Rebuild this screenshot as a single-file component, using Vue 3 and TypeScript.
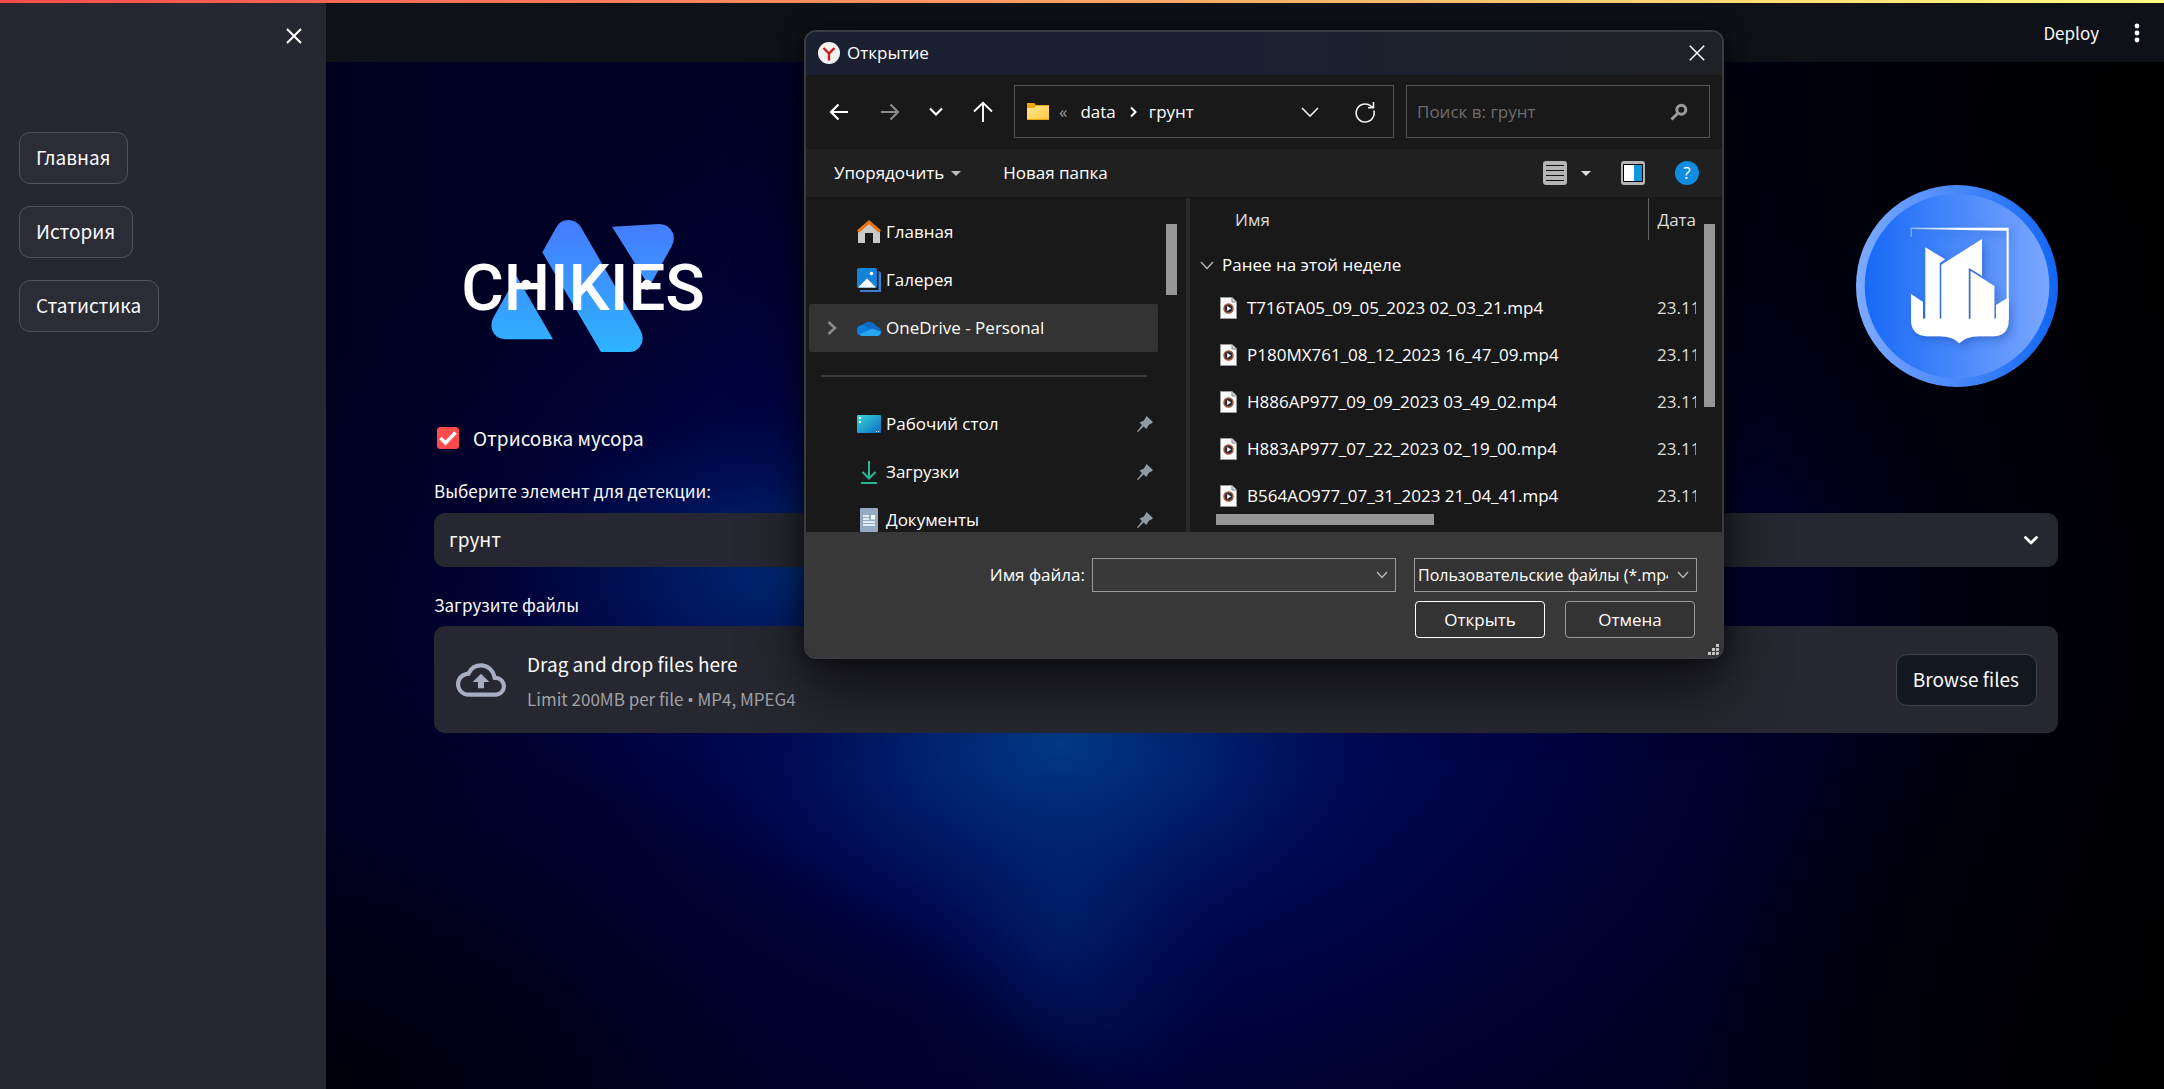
<script setup lang="ts">
import { ref } from 'vue'

interface FileRow {
  name: string
  date: string
}

interface Place {
  id: string
  label: string
  icon: 'home' | 'gallery' | 'cloud' | 'desktop' | 'download' | 'document'
  pinned?: boolean
  active?: boolean
}

const pages: string[] = ['Главная', 'История', 'Статистика']

const topPlaces: Place[] = [
  { id: 'home', label: 'Главная', icon: 'home' },
  { id: 'gallery', label: 'Галерея', icon: 'gallery' },
  { id: 'onedrive', label: 'OneDrive - Personal', icon: 'cloud', active: true },
]

const pinnedPlaces: Place[] = [
  { id: 'desktop', label: 'Рабочий стол', icon: 'desktop', pinned: true },
  { id: 'downloads', label: 'Загрузки', icon: 'download', pinned: true },
  { id: 'documents', label: 'Документы', icon: 'document', pinned: true },
]

const placeGroups: Place[][] = [topPlaces, pinnedPlaces]

const files: FileRow[] = [
  { name: 'T716TA05_09_05_2023 02_03_21.mp4', date: '23.11' },
  { name: 'P180MX761_08_12_2023 16_47_09.mp4', date: '23.11' },
  { name: 'H886AP977_09_09_2023 03_49_02.mp4', date: '23.11' },
  { name: 'H883AP977_07_22_2023 02_19_00.mp4', date: '23.11' },
  { name: 'B564AO977_07_31_2023 21_04_41.mp4', date: '23.11' },
]

const drawTrash = ref(true)
const element = ref('грунт')
const fileName = ref('')
const search = ref('')
</script>

<template>
  <div class="app">
    <div class="rainbow"></div>

    <aside class="sidebar">
      <div class="sidebar-top">
        <button class="icon-btn" type="button" aria-label="Закрыть меню">
          <svg width="16" height="16" viewBox="0 0 16 16"><path d="M1 1L15 15M15 1L1 15" stroke="#fff" stroke-width="2" fill="none" /></svg>
        </button>
      </div>
      <nav class="pages">
        <button v-for="page in pages" :key="page" class="st-btn" type="button">{{ page }}</button>
      </nav>
    </aside>

    <main class="main">
      <svg class="backdrop" viewBox="0 0 1838 1027" preserveAspectRatio="none" aria-hidden="true">
        <defs>
          <linearGradient id="base" x1="0" x2="1" y1="0" y2="0">
            <stop offset="0" stop-color="#00001e" />
            <stop offset=".3" stop-color="#000028" />
            <stop offset=".75" stop-color="#000020" />
            <stop offset="1" stop-color="#000003" />
          </linearGradient>
          <radialGradient id="wide">
            <stop offset="0" stop-color="#00106e" />
            <stop offset=".5" stop-color="#000650" stop-opacity=".8" />
            <stop offset="1" stop-color="#000030" stop-opacity="0" />
          </radialGradient>
          <radialGradient id="glow">
            <stop offset="0" stop-color="#003f8c" />
            <stop offset=".4" stop-color="#002b76" stop-opacity=".75" />
            <stop offset="1" stop-color="#00105a" stop-opacity="0" />
          </radialGradient>
          <radialGradient id="dark">
            <stop offset="0" stop-color="#000" stop-opacity=".9" />
            <stop offset="1" stop-color="#000" stop-opacity="0" />
          </radialGradient>
          <filter id="soft" x="-20%" y="-20%" width="140%" height="140%"><feGaussianBlur stdDeviation="24" /></filter>
        </defs>
        <rect width="1838" height="1027" fill="url(#base)" />
        <ellipse cx="760" cy="600" rx="860" ry="640" fill="url(#wide)" />
        <ellipse cx="480" cy="510" rx="330" ry="170" fill="url(#glow)" opacity=".65" />
        <ellipse cx="735" cy="680" rx="340" ry="230" fill="url(#glow)" />
        <ellipse cx="740" cy="860" rx="170" ry="240" fill="url(#glow)" opacity=".35" />
        <ellipse cx="1838" cy="60" rx="760" ry="460" fill="url(#dark)" />
        <ellipse cx="1838" cy="1027" rx="520" ry="420" fill="url(#dark)" />
        <path d="M-60 620L180 670L430 790L660 920L860 1110H-60Z" fill="#000020" opacity=".45" filter="url(#soft)" />
        <ellipse cx="0" cy="1027" rx="460" ry="280" fill="url(#dark)" opacity=".7" />
      </svg>

      <header class="header">
        <a class="deploy" href="#">Deploy</a>
        <button class="icon-btn" type="button" aria-label="Меню">
          <svg width="6" height="20" viewBox="0 0 6 20" fill="#fff"><circle cx="3" cy="3" r="2.4" /><circle cx="3" cy="10" r="2.4" /><circle cx="3" cy="17" r="2.4" /></svg>
        </button>
      </header>

      <div class="content">
        <div class="logos">
          <svg class="brand" width="234" height="132" viewBox="138 93 702 396" role="img" aria-label="CHIKIES">
            <defs>
              <linearGradient id="brandFill" gradientUnits="userSpaceOnUse" x1="0" y1="93" x2="0" y2="489">
                <stop offset="0" stop-color="#467bff" />
                <stop offset="1" stop-color="#2db4ff" />
              </linearGradient>
            </defs>
            <g fill="url(#brandFill)">
              <path d="M367 190L409 115Q421 93 445 93Q469 93 483 115L660 421Q677 452 659 474Q648 489 628 489H543Z" />
              <path d="M290 262L399 451H256Q226 449 216 422Q211 402 221 384Z" />
              <path d="M576 113L718 105Q748 106 759 133Q765 150 756 170L693 284Q688 290 683 284Z" />
            </g>
            <text class="brand-text" x="489" y="362" text-anchor="middle">CHIKIES</text>
            <g fill="#fff"><circle cx="318" cy="287" r="15" /><circle cx="681" cy="287" r="15" /></g>
          </svg>

          <svg class="badge" width="202" height="202" viewBox="112 75 606 606" aria-hidden="true">
            <defs>
              <linearGradient id="ring"><stop offset="0" stop-color="#7eaaff" /><stop offset="1" stop-color="#1266f4" /></linearGradient>
              <linearGradient id="disc"><stop offset="0" stop-color="#1769f6" /><stop offset="1" stop-color="#7ba7ff" /></linearGradient>
              <linearGradient id="frame"><stop offset="0" stop-color="#fff" stop-opacity=".5" /><stop offset=".5" stop-color="#fff" /></linearGradient>
              <filter id="drop"><feDropShadow dx="10" dy="12" stdDeviation="12" flood-color="#1c4fb0" flood-opacity=".5" /></filter>
            </defs>
            <circle cx="415" cy="378" r="303" fill="url(#ring)" />
            <circle cx="415" cy="378" r="277" fill="url(#disc)" />
            <g fill="#fff" filter="url(#drop)">
              <path d="M276 230V203H570V480H564V212L279 207V230Z" fill="url(#frame)" />
              <path d="M277 402L313 426V476H320V262L379 298L363 310V476H368V314L490 237V347L450 323V476H456V333L527 378V476H532V435L570 412V480Q570 529 522 529H480Q442 529 422 550Q402 529 364 529H325Q277 526 277 480Z" />
            </g>
          </svg>
        </div>

        <label class="check">
          <input v-model="drawTrash" type="checkbox" />
          <span>Отрисовка мусора</span>
        </label>

        <label class="field-label" for="element">Выберите элемент для детекции:</label>
        <div class="select-box">
          <select id="element" v-model="element">
            <option>грунт</option>
          </select>
          <svg class="select-arrow" width="14" height="9" viewBox="0 0 14 9"><path d="M1.500 1.500L7 7L12.500 1.500" fill="none" stroke="#fff" stroke-width="2.800" stroke-linejoin="round" stroke-linecap="round" /></svg>
        </div>

        <p class="field-label upload-label">Загрузите файлы</p>
        <section class="uploader">
          <svg class="cloud" width="50" height="34" viewBox="0 4 24 16">
            <path fill="#a9adc1" d="M19.35 10.04A7.49 7.49 0 0 0 12 4 7.5 7.5 0 0 0 5.35 8.04 5.994 5.994 0 0 0 0 14c0 3.31 2.69 6 6 6h13c2.76 0 5-2.24 5-5 0-2.64-2.05-4.78-4.65-4.96zM19 18H6c-2.21 0-4-1.79-4-4 0-2.05 1.53-3.76 3.56-3.97l1.07-.11.5-.95A5.469 5.469 0 0 1 12 6c2.62 0 4.88 1.86 5.39 4.43l.3 1.5 1.53.11A2.98 2.98 0 0 1 22 15c0 1.65-1.35 3-3 3zM8 13h2.55v3h2.9v-3H16l-4-4z" />
          </svg>
          <div class="upload-text">
            <span class="upload-title">Drag and drop files here</span>
            <small>Limit 200MB per file <span class="bullet">•</span> MP4, MPEG4</small>
          </div>
          <button class="st-btn browse" type="button">Browse files</button>
        </section>
      </div>
    </main>

    <div class="dialog" role="dialog" aria-label="Открытие">
      <div class="titlebar">
        <svg width="22" height="22" viewBox="0 0 22 22"><circle cx="11" cy="11" r="11" fill="#f2f2f2" /><path d="M5.500 6L11 11.500V18.500M16.500 6L11 11.500" stroke="#d3141b" stroke-width="2.400" fill="none" /></svg>
        <span class="title">Открытие</span>
        <button class="icon-btn" type="button" aria-label="Закрыть">
          <svg width="16" height="16" viewBox="0 0 16 16"><path d="M.8.8L15.200 15.200M15.200.8L.8 15.200" stroke="#fff" stroke-width="1.500" fill="none" /></svg>
        </button>
      </div>

      <div class="navbar">
        <div class="nav-buttons">
          <button class="icon-btn" type="button" aria-label="Назад">
            <svg width="20" height="18" viewBox="0 0 20 18"><path d="M9.500 1.500L2 9L9.500 16.500M2 9H19" fill="none" stroke="#fff" stroke-width="2.200" /></svg>
          </button>
          <button class="icon-btn" type="button" aria-label="Вперёд">
            <svg width="20" height="18" viewBox="0 0 20 18"><path d="M11.500 1.500L19 9L11.500 16.500M19 9H2" fill="none" stroke="#8c8c8c" stroke-width="2.200" /></svg>
          </button>
          <button class="icon-btn" type="button" aria-label="Последние расположения">
            <svg width="14" height="10" viewBox="0 0 14 10"><path d="M1 1.500L7 7.500L13 1.500" fill="none" stroke="#fff" stroke-width="2.200" /></svg>
          </button>
          <button class="icon-btn" type="button" aria-label="Вверх">
            <svg width="20" height="22" viewBox="0 0 20 22"><path d="M1 10.500L10 1.800L19 10.500M10 2V21" fill="none" stroke="#fff" stroke-width="1.900" /></svg>
          </button>
        </div>
        <div class="address">
          <svg width="22" height="18" viewBox="0 0 22 18">
            <defs><linearGradient id="folder" x2="1" y2="1"><stop offset="0" stop-color="#ffe596" /><stop offset="1" stop-color="#ffca3e" /></linearGradient></defs>
            <path d="M0 0H7L9 2H22V17H0Z" fill="#f0a70a" /><path d="M0 5H7L9 3H22V16H0Z" fill="url(#folder)" />
          </svg>
          <span class="crumb-more">«</span>
          <button class="crumb" type="button">data</button>
          <svg width="7" height="12" viewBox="0 0 7 12"><path d="M1 1.500L5.500 6L1 10.500" fill="none" stroke="#fff" stroke-width="2" /></svg>
          <button class="crumb" type="button">грунт</button>
          <button class="icon-btn address-drop" type="button" aria-label="Показать пути">
            <svg width="18" height="12" viewBox="0 0 18 12"><path d="M1 2L9 10L17 2" fill="none" stroke="#eee" stroke-width="1.600" /></svg>
          </button>
          <button class="icon-btn" type="button" aria-label="Обновить">
            <svg width="20" height="22" viewBox="0 0 20 22"><path d="M18.800 9.500A9 9 0 1 1 16 5.200L18.500 6.500M18.500 1V6.800H13" fill="none" stroke="#eee" stroke-width="1.600" /></svg>
          </button>
        </div>
        <div class="search">
          <input v-model="search" type="text" placeholder="Поиск в: грунт" aria-label="Поиск" />
          <svg width="18" height="18" viewBox="0 0 18 18"><circle cx="11.300" cy="6.700" r="4.500" fill="none" stroke="#9a9a9a" stroke-width="3" /><path d="M8 10L1.500 16.500" stroke="#9a9a9a" stroke-width="3" /></svg>
        </div>
      </div>

      <div class="toolbar">
        <button class="tool" type="button">
          Упорядочить
          <svg width="10" height="5" viewBox="0 0 10 5"><path d="M0 0H10L5 5Z" fill="#bbb" /></svg>
        </button>
        <button class="tool" type="button">Новая папка</button>
        <div class="tool-icons">
          <button class="icon-btn view" type="button" aria-label="Вид">
            <svg width="24" height="24" viewBox="0 0 24 24"><rect width="24" height="24" rx="3" fill="#b5b5b5" /><path d="M3 4.500H21M3 9.500H21M3 14.500H21M3 19.500H21" stroke="#111" stroke-width="1.200" /></svg>
            <svg width="10" height="5" viewBox="0 0 10 5"><path d="M0 0H10L5 5Z" fill="#ddd" /></svg>
          </button>
          <button class="icon-btn" type="button" aria-label="Область просмотра">
            <svg width="24" height="24" viewBox="0 0 24 24"><rect width="24" height="24" rx="3" fill="#b5b5b5" /><rect x="2" y="3" width="20" height="18" fill="#000" rx="1" /><rect x="3" y="4" width="10" height="16" fill="#fff" /><rect x="13" y="4" width="8" height="16" fill="#1496dc" /></svg>
          </button>
          <button class="help" type="button" aria-label="Справка">?</button>
        </div>
      </div>

      <div class="panes">
        <nav class="places">
          <div class="places-list">
            <template v-for="(group, index) in placeGroups" :key="index">
              <div v-if="index > 0" class="separator"></div>
              <a v-for="place in group" :key="place.id" href="#" class="place" :class="{ active: place.active }">
                <span class="expander">
                  <svg v-if="place.active" width="10" height="14" viewBox="0 0 10 14"><path d="M1.500 1L8 7L1.500 13" fill="none" stroke="#8a8a8a" stroke-width="2.600" /></svg>
                </span>
                <svg v-if="place.icon === 'home'" width="24" height="24" viewBox="0 0 24 24">
                  <path d="M1 11L12 2L23 11V23H16V13H8V23H1Z" fill="#c9c9c9" /><path d="M1 11.500L12 2L23 11.500" fill="none" stroke="#ee7410" stroke-width="3" />
                </svg>
                <svg v-else-if="place.icon === 'gallery'" width="24" height="24" viewBox="0 0 24 24">
                  <path d="M21.500 3Q24 3 24 6V24H3V22H21.500Z" fill="#3b80cf" /><rect width="20" height="20" rx="2" fill="#1483d8" /><path d="M1 19.500L10 10.500L19 19.500Z" fill="#fff" /><circle cx="14.500" cy="5.500" r="1.800" fill="#fff" />
                </svg>
                <svg v-else-if="place.icon === 'cloud'" width="24" height="24" viewBox="0 0 24 24">
                  <path d="M5.500 9A8 8 0 0 1 19 10Q24 11 24 15.500Q24 20 19 20H6Q0 20 0 14.500Q0 10 5.500 9Z" fill="#0f6cc4" /><path d="M0 14.500Q0 9 6 9L15 14L4 19.500Q0 18.500 0 14.500Z" fill="#0b7ddb" /><path d="M2.500 18.500L15 12.500L24 15.500Q24 20 19 20H6Q4 20 2.500 18.500Z" fill="#2aa6ee" />
                </svg>
                <svg v-else-if="place.icon === 'desktop'" width="24" height="24" viewBox="0 0 24 24">
                  <defs><linearGradient id="desk" x2="1" y2="1"><stop offset="0" stop-color="#36d6d8" /><stop offset="1" stop-color="#0d6cc4" /></linearGradient></defs>
                  <rect y="3" width="24" height="18" rx="1" fill="url(#desk)" /><path d="M2 5h2v2h-2zM2 9h2v2h-2zM19 19h1v1h-1zM21 19h1v1h-1z" fill="#fff" />
                </svg>
                <svg v-else-if="place.icon === 'download'" width="24" height="24" viewBox="0 0 24 24">
                  <path d="M12 1V18M5.500 12L12 18.500L18.500 12M4 23H20" fill="none" stroke="#24b892" stroke-width="2" />
                </svg>
                <svg v-else width="24" height="24" viewBox="0 0 24 24">
                  <rect x="3" width="18" height="24" rx="1" fill="#93a9c4" /><path d="M6 8H12M6 11H12M6 14H18M6 17H18" stroke="#fff" stroke-width="1.400" /><rect x="14" y="7" width="4" height="4.500" fill="#fff" />
                </svg>
                <span class="place-label">{{ place.label }}</span>
                <svg v-if="place.pinned" class="pin" width="16" height="16" viewBox="0 0 16 16"><path d="M9.500 0L16 6L14.500 7.500L12 8.500L9.500 13L6.500 10.500L1 16L0 15.500L5 9L2.500 6.500L7 4.500Z" fill="#8f9aa2" /></svg>
              </a>
            </template>
          </div>
          <span class="thumb places-thumb"></span>
        </nav>

        <section class="files">
          <div class="files-row">
            <div class="files-clip">
              <table>
                <colgroup><col class="col-name" /><col /></colgroup>
                <thead>
                  <tr><th scope="col" class="th-name">Имя</th><th scope="col" class="th-date">Дата</th></tr>
                </thead>
                <tbody>
                  <tr class="group">
                    <th colspan="2" scope="rowgroup">
                      <div class="cell">
                        <svg width="14" height="9" viewBox="0 0 14 9"><path d="M1 1L7 7.500L13 1" fill="none" stroke="#bbb" stroke-width="1.300" /></svg>
                        Ранее на этой неделе
                      </div>
                    </th>
                  </tr>
                  <tr v-for="file in files" :key="file.name" class="file">
                    <td>
                      <div class="cell file-cell">
                        <svg width="17" height="22" viewBox="0 0 17 22">
                          <path d="M.5.5H12L16.500 5V21.500H.5Z" fill="#fafafa" stroke="#999" /><path d="M12 .5V5H16.500" fill="#ddd" stroke="#888" /><circle cx="8.500" cy="11.500" r="4.500" fill="#2c2c38" stroke="#a0573f" stroke-width="1.500" /><path d="M7.200 9L11 11.500L7.200 14Z" fill="#fff" />
                        </svg>
                        {{ file.name }}
                      </div>
                    </td>
                    <td class="date">{{ file.date }}</td>
                  </tr>
                </tbody>
              </table>
            </div>
            <span class="thumb files-thumb"></span>
          </div>
          <div class="hscroll"><span class="thumb"></span></div>
        </section>
      </div>

      <form class="footer" @submit.prevent>
        <div class="footer-row">
          <label for="filename">Имя файла:</label>
          <div class="combo name-combo">
            <input id="filename" v-model="fileName" type="text" />
            <svg width="12" height="8" viewBox="0 0 12 8"><path d="M1 1L6 6.500L11 1" fill="none" stroke="#bbb" stroke-width="1.300" /></svg>
          </div>
          <div class="combo type-combo">
            <select aria-label="Тип файлов">
              <option>Пользовательские файлы (*.mp4)</option>
            </select>
            <svg width="12" height="8" viewBox="0 0 12 8"><path d="M1 1L6 6.500L11 1" fill="none" stroke="#bbb" stroke-width="1.300" /></svg>
          </div>
        </div>
        <div class="footer-actions">
          <button class="win-btn primary" type="submit">Открыть</button>
          <button class="win-btn" type="button">Отмена</button>
        </div>
        <svg class="grip" width="11" height="11" viewBox="0 0 11 11" fill="#c4c4c4"><path d="M8 0h3v3h-3zM8 4h3v3h-3zM8 8h3v3h-3zM4 4h3v3h-3zM4 8h3v3h-3zM0 8h3v3h-3z" /></svg>
      </form>
    </div>
  </div>
</template>

<style>
body {
  margin: 0;
  background: #0e1117;
}
</style>

<style scoped>
.app,
.app * {
  box-sizing: border-box;
}

.app {
  position: relative;
  display: flex;
  min-height: 100vh;
  overflow: hidden;
  color: #fafafa;
  font-family: "Noto Sans CJK SC", "Noto Sans", sans-serif;
  font-size: 19px;
  line-height: 28px;
}

button,
input,
select {
  margin: 0;
  padding: 0;
  color: inherit;
  font: inherit;
}

a {
  color: inherit;
  text-decoration: none;
}

svg {
  display: block;
  flex: none;
}

.icon-btn {
  display: flex;
  align-items: center;
  border: 0;
  background: none;
}

.rainbow {
  position: absolute;
  z-index: 3;
  top: 0;
  left: 0;
  right: 0;
  height: 3px;
  background: linear-gradient(90deg, #ff4b4b, #fffd80);
}

/* Sidebar */
.sidebar {
  flex: 0 0 326px;
  background: #262730;
}

.sidebar-top {
  display: flex;
  justify-content: flex-end;
  height: 132px;
  padding: 28px 24px 0 0;
}

.sidebar-top .icon-btn {
  height: 16px;
}

.pages {
  display: flex;
  flex-direction: column;
  align-items: flex-start;
  gap: 22px;
  padding-left: 19px;
}

.st-btn {
  height: 52px;
  padding: 0 17px 2px 16px;
  border: 1px solid #51525c;
  border-radius: 11px;
  background: #2b2c36;
  white-space: nowrap;
}

/* Main column */
.main {
  position: relative;
  flex: 1;
  min-width: 0;
}

.backdrop {
  position: absolute;
  top: 62px;
  left: 0;
  width: 100%;
  height: calc(100% - 62px);
}

.header {
  position: relative;
  display: flex;
  align-items: center;
  justify-content: flex-end;
  gap: 35px;
  height: 62px;
  padding: 3px 24px 0 0;
  background: #0e1117;
  font-size: 17px;
}

.content {
  position: relative;
  padding: 123px 106px 0 108px;
}

.logos {
  display: flex;
  align-items: center;
  justify-content: space-between;
  height: 202px;
  padding-left: 32px;
  margin-bottom: 37px;
}

.brand {
  overflow: visible;
}

.brand-text {
  fill: #fff;
  font-family: Roboto, sans-serif;
  font-size: 196px;
  font-weight: 500;
}

.check {
  display: flex;
  align-items: center;
  gap: 14px;
  width: max-content;
  padding-left: 3px;
}

.check input {
  appearance: none;
  width: 22px;
  height: 22px;
  border: 1px solid #777;
  border-radius: 3px;
}

.check input:checked {
  border-color: #ff4b4b;
  background: #ff4b4b url("data:image/svg+xml,%3Csvg xmlns='http://www.w3.org/2000/svg' viewBox='0 0 20 20'%3E%3Cpath d='M2.500 10L7.500 15L17.500 4.500' fill='none' stroke='white' stroke-width='3.400'/%3E%3C/svg%3E") center / 20px no-repeat;
}

.field-label {
  display: block;
  margin: 25px 0 8px;
  font-size: 17px;
  line-height: 28px;
}

.upload-label {
  margin: 24px 0 7px;
}

.select-box {
  position: relative;
}

.select-box select {
  display: block;
  width: 100%;
  height: 54px;
  padding: 0 15px 2px;
  border: 0;
  border-radius: 11px;
  background: #262730;
  appearance: none;
}

.select-arrow {
  position: absolute;
  top: 23px;
  right: 20px;
}

.uploader {
  display: flex;
  align-items: center;
  height: 107px;
  padding: 0 21px 0 22px;
  border-radius: 11px;
  background: #262730;
}

.upload-text {
  display: flex;
  flex: 1;
  flex-direction: column;
  gap: 7px;
  margin-left: 21px;
  padding-top: 4px;
}

.upload-text small {
  color: #a0a1a6;
  font-size: 17px;
}

.bullet {
  font-family: "Noto Sans", sans-serif;
}

.browse {
  border-color: #41444c;
  background: #131720;
}

/* File dialog */
.dialog {
  position: absolute;
  z-index: 5;
  top: 30px;
  left: 804px;
  width: 920px;
  overflow: hidden;
  border: 2px solid #3a3b40;
  border-radius: 12px;
  background: #191919;
  box-shadow: 0 30px 60px rgba(0, 0, 0, 0.6), 0 0 20px rgba(0, 0, 0, 0.5);
  color: #fff;
  font-family: "Open Sans", "Noto Sans", sans-serif;
  font-size: 17px;
  line-height: 24px;
}

.titlebar {
  display: flex;
  align-items: center;
  height: 43px;
  padding: 0 17px 2px 12px;
  background: linear-gradient(90deg, #1b2031 45%, #1f2125);
}

.title {
  flex: 1;
  margin-left: 7px;
}

.navbar {
  display: flex;
  align-items: center;
  height: 74px;
  padding: 0 12px 2px 23px;
}

.nav-buttons {
  display: flex;
  align-items: center;
  gap: 30px;
  width: 185px;
  padding-top: 2px;
}

.address {
  display: flex;
  align-items: center;
  width: 380px;
  height: 53px;
  padding: 2px 18px 0 12px;
  border: 1px solid #535353;
}

.crumb-more {
  margin: 0 13px 0 10px;
  color: #999;
}

.crumb {
  border: 0;
  background: none;
}

.crumb + svg {
  margin: 0 12px 0 14px;
}

.address-drop {
  margin: 0 36px 0 auto;
}

.search {
  display: flex;
  flex: 1;
  align-items: center;
  height: 53px;
  margin-left: 12px;
  padding: 2px 21px 0 10px;
  border: 1px solid #535353;
}

.search input {
  flex: 1;
  min-width: 0;
  border: 0;
  outline: 0;
  background: none;
}

.search input::placeholder {
  color: #6e6e6e;
  opacity: 1;
}

.toolbar {
  display: flex;
  align-items: center;
  gap: 42px;
  height: 48px;
  padding: 0 23px 0 28px;
  background: #202020;
}

.tool {
  display: flex;
  align-items: center;
  gap: 7px;
  border: 0;
  background: none;
}

.tool-icons {
  display: flex;
  align-items: center;
  gap: 30px;
  margin-left: auto;
}

.view {
  gap: 14px;
}

.help {
  width: 24px;
  height: 24px;
  border: 0;
  border-radius: 50%;
  background: #0f8be0;
  line-height: 24px;
}

.panes {
  display: flex;
  height: 335px;
  border-top: 1px solid #161616;
}

.places {
  display: flex;
  flex: 0 0 384px;
  overflow: hidden;
  padding: 10px 8px 0 3px;
  border-right: 4px solid #2a2a2a;
}

.places-list {
  flex: 0 0 349px;
}

.place {
  display: flex;
  align-items: center;
  height: 48px;
  padding-right: 5px;
}

.place.active {
  border-radius: 2px;
  background: #333;
}

.expander {
  width: 48px;
  padding-left: 18px;
}

.place-label {
  flex: 1;
  margin-left: 5px;
}

.separator {
  height: 2px;
  margin: 23px 11px 23px 12px;
  background: #3a3a3a;
}

.thumb {
  display: block;
  background: #969696;
}

.places-thumb {
  width: 11px;
  height: 71px;
  margin: 16px 0 0 8px;
}

.files {
  flex: 1;
  min-width: 0;
}

.files-row {
  display: flex;
  height: 309px;
}

.files-clip {
  flex: 0 0 506px;
  overflow: hidden;
}

table {
  width: 520px;
  border-collapse: collapse;
  table-layout: fixed;
}

.col-name {
  width: 458px;
}

th,
td {
  padding: 0;
  font-weight: 400;
  text-align: left;
  white-space: nowrap;
}

thead th {
  height: 42px;
  padding-top: 2px;
  color: #dedede;
}

thead .th-name {
  padding-left: 45px;
}

thead .th-date {
  padding-left: 9px;
  border-left: 1px solid #636363;
}

.cell {
  display: flex;
  align-items: center;
  gap: 10px;
}

.group th {
  height: 44px;
  padding: 6px 0 0 10px;
}

.group .cell {
  gap: 8px;
}

.file td {
  height: 47px;
}

.file-cell {
  padding-left: 30px;
}

.file .date {
  padding-left: 9px;
  color: #dedede;
}

.files-thumb {
  width: 11px;
  height: 183px;
  margin: 26px 0 0 8px;
}

.hscroll {
  padding: 7px 0 0 26px;
}

.hscroll .thumb {
  width: 218px;
  height: 11px;
}

.footer {
  position: relative;
  height: 125px;
  padding: 26px 25px 0 0;
  background: #383838;
}

.footer-row {
  display: flex;
  align-items: center;
  justify-content: flex-end;
}

.combo {
  display: flex;
  align-items: center;
  height: 34px;
  padding-right: 7px;
  border: 1px solid #9a9a9a;
}

.combo input,
.combo select {
  flex: 1;
  min-width: 0;
  height: 32px;
  padding-left: 3px;
  border: 0;
  outline: 0;
  background: none;
  appearance: none;
}

.combo select {
  font-size: 16px;
}

.name-combo {
  width: 304px;
  margin: 0 18px 0 7px;
}

.type-combo {
  gap: 9px;
  width: 283px;
  background: #333;
}

.footer-actions {
  display: flex;
  justify-content: flex-end;
  gap: 20px;
  margin-top: 9px;
  padding-right: 2px;
}

.win-btn {
  width: 130px;
  height: 37px;
  border: 1px solid #9a9a9a;
  border-radius: 4px;
  background: #333;
}

.win-btn.primary {
  border-color: #fff;
}

.grip {
  position: absolute;
  right: 3px;
  bottom: 2px;
}
</style>
